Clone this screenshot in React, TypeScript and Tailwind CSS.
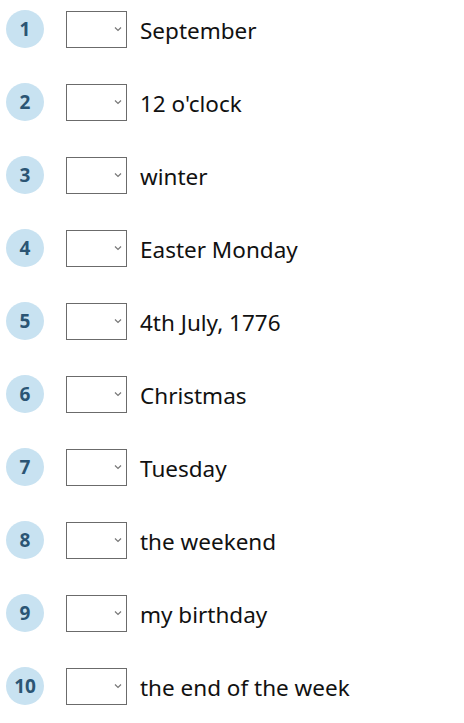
const items = [
  'September',
  "12 o'clock",
  'winter',
  'Easter Monday',
  '4th July, 1776',
  'Christmas',
  'Tuesday',
  'the weekend',
  'my birthday',
  'the end of the week',
];

export default function App() {
  return (
    <div className="bg-white min-h-screen pt-[10px] pl-[6px] font-['Noto_Sans',sans-serif]">
      {items.map((label, i) => (
        <div key={i} className="flex items-center h-[38px] mb-[35px]">
          <div className="w-[38px] h-[38px] rounded-full bg-[#c8e2f1] flex items-center justify-center pt-[1px] text-[19px] font-bold text-[#2b5574]">
            {i + 1}
          </div>
          <div className="ml-[22px] w-[61px] h-[37px] border border-[#6b6b6b] bg-white relative">
            <svg className="absolute right-[4px] top-[14px]" width="8" height="6" viewBox="0 0 8 6">
              <path d="M1 1.5 L4 4.5 L7 1.5" fill="none" stroke="#777" strokeWidth="1.2" />
            </svg>
          </div>
          <span className="ml-[13px] pt-[5px] text-[22.5px] text-[#111] leading-none">{label}</span>
        </div>
      ))}
    </div>
  );
}
